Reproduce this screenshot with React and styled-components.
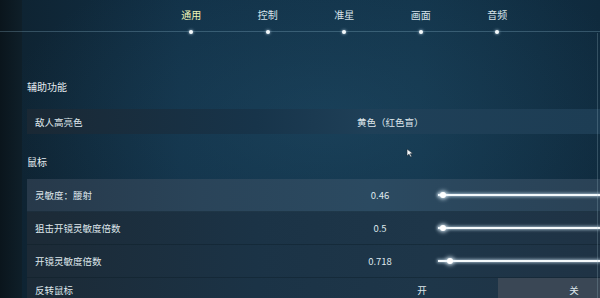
import React from 'react';
import styled, { createGlobalStyle } from 'styled-components';

const GlobalStyle = createGlobalStyle`
  html, body {
    margin: 0;
    padding: 0;
    background: #0d2434;
  }
  body {
    font-family: "Noto Sans CJK SC", "Noto Sans", sans-serif;
  }
  *, *::before, *::after {
    box-sizing: border-box;
  }
`;

const tabs = ['通用', '控制', '准星', '画面', '音频'];

const sliders = [
  { label: '灵敏度：腰射', value: '0.46', pos: 5, light: true },
  { label: '狙击开镜灵敏度倍数', value: '0.5', pos: 5 },
  { label: '开镜灵敏度倍数', value: '0.718', pos: 12 }
];

const Screen = styled.div`
  position: relative;
  width: 600px;
  height: 298px;
  overflow: hidden;
  display: flex;
  background:
    radial-gradient(ellipse at 55% 40%, rgba(40, 90, 120, 0.35), transparent 70%),
    linear-gradient(90deg, #0e2230 0%, #113046 30%, #123349 70%, #0f2a3d 100%);
  color: #dfe7ec;
`;

const Edge = styled.div`
  width: 22px;
  flex-shrink: 0;
  background: linear-gradient(90deg, #0a151c, #0f1f29);
`;

const Main = styled.div`
  flex: 1;
  display: flex;
  flex-direction: column;
  min-width: 0;
`;

const TopBar = styled.nav`
  flex-shrink: 0;
  height: 32px;
  border-bottom: 1px solid rgba(150, 195, 215, 0.28);
  margin-left: -22px;
  display: grid;
  grid-template-columns: repeat(5, 76.5px);
  padding-left: 153px;
`;

const Tab = styled.div`
  position: relative;
  text-align: center;
  font-size: 10px;
  line-height: 14px;
  padding-top: 8px;
  color: ${(p) => (p.active ? '#eef3b4' : '#d6e2ea')};

  &::after {
    content: '';
    position: absolute;
    left: 50%;
    bottom: -3px;
    width: 4px;
    height: 4px;
    margin-left: -2px;
    border-radius: 50%;
    background: #f2f8fb;
    box-shadow: 0 0 3px rgba(220, 240, 255, 0.9);
  }
`;

const Content = styled.div`
  flex-shrink: 0;
  padding-left: 5px;
  display: flex;
  flex-direction: column;
`;

const SectionTitle = styled.div`
  flex-shrink: 0;
  font-size: 10px;
  line-height: 14px;
  color: #e4ebef;
  margin-top: ${(p) => p.top}px;
  margin-bottom: ${(p) => p.bottom}px;
`;

const Row = styled.div`
  flex-shrink: 0;
  display: flex;
  align-items: center;
  height: ${(p) => p.h}px;
  font-size: 9.5px;
  background: ${(p) =>
    p.light
      ? 'linear-gradient(90deg, #27394a 0%, #2a4459 30%, #2b4a61 60%, #2a4256 100%)'
      : p.band
      ? 'linear-gradient(90deg, #1a2834 0%, #17344a 40%, #1f4058 60%, #1d3d54 100%)'
      : 'linear-gradient(90deg, #1c2a36 0%, #1b3346 40%, #1e3649 70%, #1f3345 100%)'};
  border-bottom: ${(p) => (p.sep ? '1px solid rgba(10, 25, 35, 0.35)' : 'none')};
`;

const Label = styled.div`
  width: 330px;
  padding-left: 8px;
  flex-shrink: 0;
  align-self: ${(p) => (p.top ? 'flex-start' : 'auto')};
  padding-top: ${(p) => (p.top ? 5 : 0)}px;
`;

const Value = styled.div`
  width: ${(p) => p.w}px;
  flex-shrink: 0;
  text-align: ${(p) => (p.center ? 'center' : 'left')};
`;

const Slider = styled.div`
  position: relative;
  flex: 1;
  height: 2px;
  margin-left: 35px;
  background: #f4f9fb;
  box-shadow: 0 0 3px 1px rgba(220, 240, 255, 0.6);
`;

const Thumb = styled.span`
  position: absolute;
  top: -2px;
  width: 6px;
  height: 6px;
  margin-left: -3px;
  border-radius: 50%;
  background: #ffffff;
  box-shadow: 0 0 4px 1px rgba(230, 245, 255, 0.9);
`;

const Toggle = styled.div`
  width: ${(p) => p.w}px;
  flex-shrink: 0;
  align-self: stretch;
  display: flex;
  justify-content: center;
  padding-top: 5px;
  padding-right: ${(p) => p.shift || 0}px;
  background: ${(p) => (p.on ? '#3a4755' : 'transparent')};
`;

const Cursor = styled.svg`
  position: absolute;
  left: 406px;
  top: 148px;
`;

const Scroll = styled.div`
  position: absolute;
  right: 2px;
  top: 33px;
  bottom: 0;
  width: 1px;
  background: rgba(160, 190, 205, 0.25);
`;

export default function App() {
  return (
    <Screen>
      <GlobalStyle />
      <Edge />
      <Main>
        <TopBar>
          {tabs.map((t, i) => (
            <Tab key={t} active={i === 0}>
              {t}
            </Tab>
          ))}
        </TopBar>
        <Content>
          <SectionTitle top={48} bottom={15}>辅助功能</SectionTitle>
          <Row h={25} band>
            <Label>敌人高亮色</Label>
            <Value w={120}>黄色（红色盲）</Value>
          </Row>
          <SectionTitle top={21} bottom={10}>鼠标</SectionTitle>
          {sliders.map((s) => (
            <Row key={s.label} h={33} light={s.light} sep>
              <Label>{s.label}</Label>
              <Value w={46} center>
                {s.value}
              </Value>
              <Slider>
                <Thumb style={{ left: `${s.pos}px` }} />
              </Slider>
            </Row>
          ))}
          <Row h={33}>
            <Label top>反转鼠标</Label>
            <Toggle w={141} shift={11}>
              开
            </Toggle>
            <Toggle w={152} on>
              关
            </Toggle>
          </Row>
        </Content>
      </Main>
      <Cursor width="8" height="10" viewBox="0 0 8 10">
        <path d="M1 1 L1 8 L3 6.2 L4.6 9 L5.8 8.4 L4.3 5.7 L7 5.6 Z" fill="#f2f5f7" stroke="#1a2a36" strokeWidth="0.6" />
      </Cursor>
      <Scroll />
    </Screen>
  );
}
